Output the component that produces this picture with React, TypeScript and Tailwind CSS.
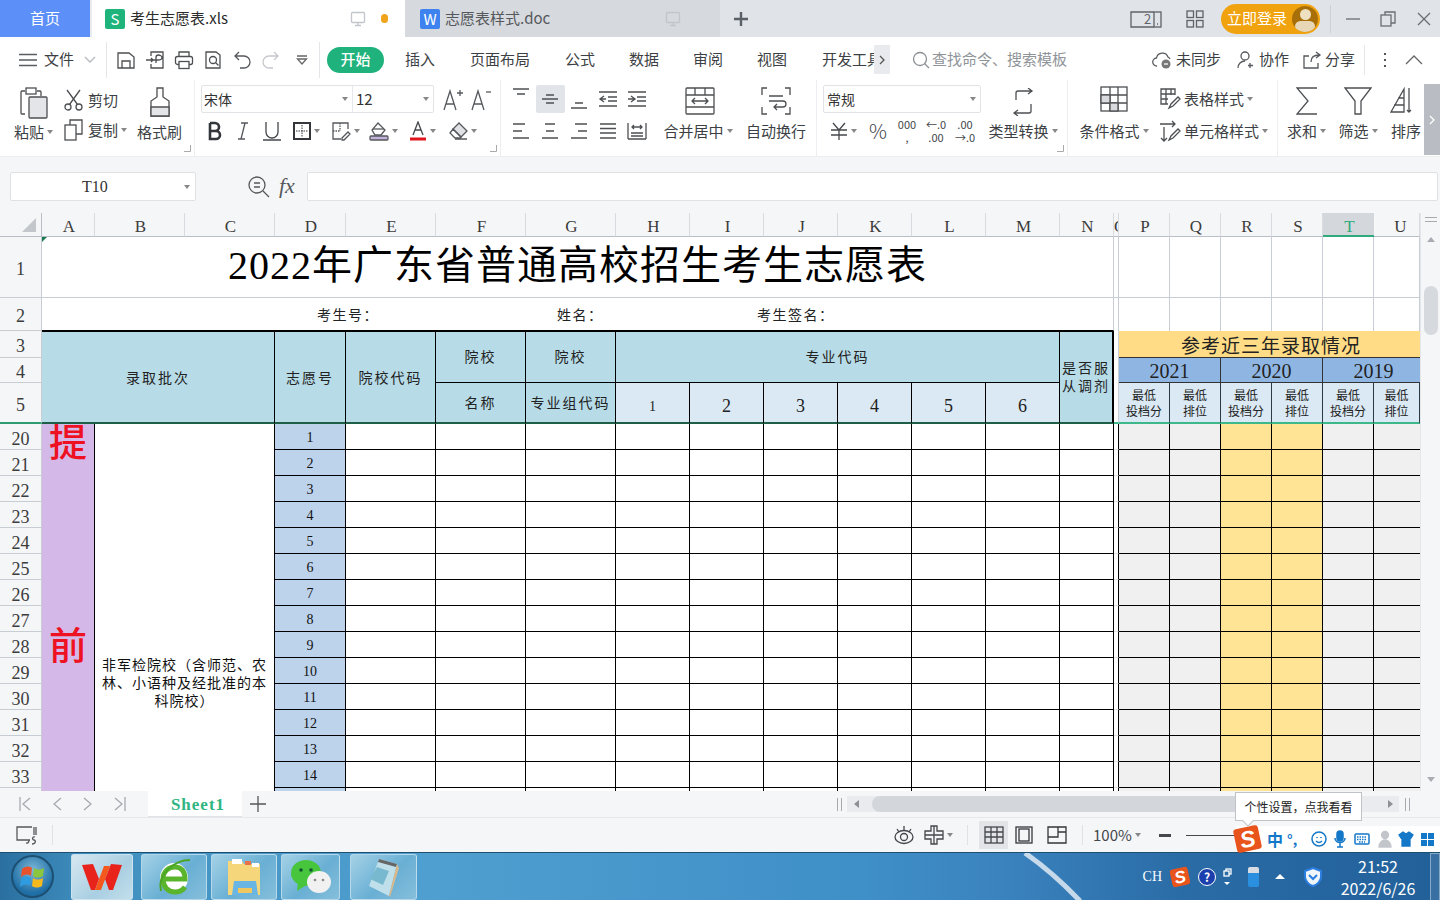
import React from 'react';

const serif = "font-['Liberation_Serif','Noto_Sans_CJK_SC',serif]";

const Ic: React.FC<{ w?: number; h?: number; vb?: string; c?: string; sw?: number; children: React.ReactNode }> = ({ w = 22, h = 22, vb, c = '#4d4f52', sw = 1.3, children }) => (
    <svg width={w} height={h} viewBox={vb || `0 0 ${w} ${h}`} fill="none" stroke={c} strokeWidth={sw} className="shrink-0">
        {children}
    </svg>
);

const Caret = () => (
    <svg width="6" height="4" viewBox="0 0 6 4" className="shrink-0 ml-[3px]"><path d="M0 0h6L3 4z" fill="#888" /></svg>
);

const Corner = () => (
    <svg width="7" height="7" viewBox="0 0 7 7"><path d="M6.5 0v6.5H0" fill="none" stroke="#aaa" /></svg>
);

const Monitor = ({ c = '#c2c6cc' }: { c?: string }) => (
    <Ic w={16} h={16} c={c}>
        <rect x="1.5" y="1.5" width="13" height="10" rx="1" />
        <path d="M8 11.5v3M5 14.5h6" />
    </Ic>
);

const TabBar = () => (
    <div className="h-[37px] flex bg-[#e0e3e8] shrink-0 text-[15px]">
        <div className="w-[90px] bg-[#5c8ff7] text-white flex items-center justify-center">首页</div>
        <div className="w-[2px] bg-[#e9ebef]" />
        <div className="w-[313px] bg-white flex items-center pl-[13px] text-[#2b2b2b]">
            <div className="w-[20px] h-[20px] rounded-[2px] bg-[#1fb47c] text-white text-[15px] flex items-center justify-center leading-none">S</div>
            <span className="ml-[5px] w-[220px]">考生志愿表.xls</span>
            <Monitor />
            <div className="w-[7px] h-[9px] rounded-full bg-[#f0a41c] ml-[15px]" />
        </div>
        <div className="w-[315px] bg-[#d6d9de] flex items-center pl-[15px] text-[#55585c]">
            <div className="w-[20px] h-[20px] rounded-[2px] bg-[#3d82ee] text-white text-[15px] flex items-center justify-center leading-none">W</div>
            <span className="ml-[5px] w-[220px]">志愿表样式.doc</span>
            <Monitor />
        </div>
        <div className="w-[42px] flex items-center justify-center">
            <Ic w={16} h={16} c="#5a6068" sw={2.4}><path d="M8 1v14M1 8h14" /></Ic>
        </div>
        <div className="w-[368px]" />
        <div className="flex items-center">
            <svg width="32" height="20" viewBox="0 0 32 20" fill="none" stroke="#5f6368" strokeWidth="1.3">
                <path d="M24 3H1v15h23" />
                <rect x="24" y="3" width="7" height="15" />
                <path d="M27 15h1" />
                <text x="14" y="15" fontSize="13" fill="#5f6368" stroke="none">2</text>
            </svg>
        </div>
        <div className="flex items-center ml-[24px]">
            <Ic w={18} h={18} c="#5f6368"><rect x="1" y="1" width="6.5" height="6.5" /><rect x="10.5" y="1" width="6.5" height="6.5" /><rect x="1" y="10.5" width="6.5" height="6.5" /><rect x="10.5" y="10.5" width="6.5" height="6.5" /></Ic>
        </div>
        <div className="flex items-center ml-[17px]">
            <div className="w-[99px] h-[30px] rounded-full bg-[#f0a30f] flex items-center justify-between pl-[6px] pr-[2px] text-white text-[15px]">
                <span>立即登录</span>
                <div className="w-[26px] h-[26px] rounded-full bg-[#a86f08] overflow-hidden flex flex-col items-center pt-[3px]">
                    <div className="w-[11px] h-[12px] rounded-full bg-[#efe0c2]" />
                    <div className="w-[20px] h-[12px] rounded-full bg-[#e8d7b6] mt-[1px]" />
                </div>
            </div>
        </div>
        <div className="flex items-center ml-[10px]"><div className="w-px h-[28px] bg-[#cdd0d5]" /></div>
        <div className="flex items-center ml-[15px]"><Ic w={14} h={14} c="#6a6d72"><path d="M0 7h14" /></Ic></div>
        <div className="flex items-center ml-[20px]"><Ic w={16} h={16} c="#6a6d72"><rect x="1" y="4" width="10" height="11" /><path d="M5 4V1h10v11h-4" /></Ic></div>
        <div className="flex items-center ml-[21px]"><Ic w={14} h={14} c="#6a6d72"><path d="M1 1l12 12M13 1L1 13" /></Ic></div>
    </div>
);

const MenuBar = () => (
    <div className="h-[43px] bg-white flex items-center text-[15px] text-[#3c3f44] shrink-0 pl-[19px] pt-[2px]">
        <Ic w={18} h={14} c="#5a5d62"><path d="M0 1.5h18M0 7h18M0 12.5h18" /></Ic>
        <span className="ml-[7px]">文件</span>
        <div className="ml-[10px]"><Ic w={12} h={8} c="#b5b8bd"><path d="M1 1l5 5 5-5" /></Ic></div>
        <div className="w-px h-[36px] bg-[#e4e6ea] ml-[10px]" />
        <div className="flex items-center ml-[9px] gap-[9px]">
            <Ic w={20} h={20}><path d="M2 3h11l5 4v11H2zM6 18v-7h8v7" /></Ic>
            <Ic w={20} h={20}><path d="M6 6V2h12v16H6v-4M1 10h7M6 8l2 2-2 2M8 10h5c3 0 4-1 4-2.500S15 5 13.500 5 11 6 11 7.500V13" /></Ic>
            <Ic w={20} h={20}><path d="M5 6V2h10v4" /><rect x="1.500" y="6.500" width="17" height="8" rx="2" /><rect x="5" y="11.500" width="10" height="7" fill="#fff" /></Ic>
            <Ic w={20} h={20}><path d="M3 2h10l4 3v13H3z" /><circle cx="10" cy="10" r="3.500" /><path d="M12.500 12.500l3 3" /></Ic>
            <Ic w={20} h={20} c="#55585c"><path d="M7 2L3 6l4 4M3 6h9a6 6 0 010 12H8" /></Ic>
            <Ic w={20} h={20} c="#c6c8cc"><path d="M13 2l4 4-4 4M17 6H8a6 6 0 000 12h4" /></Ic>
            <div className="ml-[6px]"><Ic w={12} h={12} c="#666"><path d="M1 2h10M1.500 5h9L6 10z" /></Ic></div>
        </div>
        <div className="w-px h-[36px] bg-[#e4e6ea] ml-[11px]" />
        <div className="ml-[7px] w-[57px] h-[26px] rounded-full bg-[#20b27c] text-white flex items-center justify-center font-medium">开始</div>
        <span className="ml-[21px] w-[65px]">插入</span>
        <span className="w-[95px]">页面布局</span>
        <span className="w-[64px]">公式</span>
        <span className="w-[64px]">数据</span>
        <span className="w-[64px]">审阅</span>
        <span className="w-[65px]">视图</span>
        <div className="w-[52px] overflow-hidden whitespace-nowrap">开发工具</div>
        <div className="w-[16px] h-[29px] bg-[#e8eaed] flex items-center justify-center">
            <Ic w={6} h={10} c="#555"><path d="M1 1l4 4-4 4" /></Ic>
        </div>
        <div className="ml-[22px]"><Ic w={18} h={18} c="#8b9096"><circle cx="8" cy="8" r="6.500" /><path d="M12.500 12.500L17 17" /></Ic></div>
        <span className="ml-[2px] w-[220px] text-[#8f9499]">查找命令、搜索模板</span>
        <Ic w={20} h={20} c="#55585c"><path d="M5 16a4 4 0 01-.5-8A6 6 0 0116 7a4 4 0 012 2" /><circle cx="14" cy="14" r="4.500" fill="#777" stroke="none" /><path d="M12 14h4" stroke="#fff" /></Ic>
        <span className="ml-[4px]">未同步</span>
        <div className="ml-[15px]"><Ic w={20} h={20} c="#55585c"><circle cx="9" cy="6" r="4" /><path d="M2 18c0-4 3-7 7-7M14 13v5M12 15.500h5" /></Ic></div>
        <span className="ml-[3px]">协作</span>
        <div className="ml-[13px]"><Ic w={20} h={20} c="#55585c"><path d="M7 6H2v12h14v-5M9 12c0-5 3-7 8-7M14 2l4 3-4 3" /></Ic></div>
        <span className="ml-[3px]">分享</span>
        <div className="w-px h-[30px] bg-[#e4e6ea] ml-[9px]" />
        <div className="ml-[19px] flex flex-col gap-[4px]">
            <div className="w-[2px] h-[2px] bg-[#555]" /><div className="w-[2px] h-[2px] bg-[#555]" /><div className="w-[2px] h-[2px] bg-[#555]" />
        </div>
        <div className="ml-[19px]"><Ic w={18} h={10} c="#666"><path d="M1 9l8-8 8 8" /></Ic></div>
    </div>
);

const Ribbon = () => (
    <div className="h-[77px] bg-white flex text-[15px] text-[#3c3f44] shrink-0 border-b border-[#eceef1] relative">
        {/* clipboard */}
        <div className="w-[195px] flex pt-[7px] border-r border-[#eceef1] relative">
            <div className="w-[58px] pl-[14px] flex flex-col">
                <div className="ml-[5px] h-[38px]">
                    <Ic w={30} h={32}><path d="M6 27H3a1 1 0 01-1-1V5a1 1 0 011-1h3M18 4h3a1 1 0 011 1v4" /><rect x="7" y="1" width="10" height="6" /><rect x="10" y="10" width="18" height="21" rx="1" fill="#e4e5e8" /></Ic>
                </div>
                <div className="flex items-center h-[20px] mt-[-3px] whitespace-nowrap">粘贴<Caret /></div>
            </div>
            <div className="w-[78px] flex flex-col pl-[6px]">
                <div className="flex items-center h-[26px]">
                    <Ic w={20} h={22}><circle cx="4" cy="18" r="3" /><circle cx="15" cy="18" r="3" /><path d="M5.500 15.500L16 1M13.500 15.500L3 1" /></Ic>
                    <span className="ml-[4px]">剪切</span>
                </div>
                <div className="flex items-center h-[34px]">
                    <Ic w={20} h={22}><rect x="1" y="6" width="11" height="15" /><path d="M6 6V1h12v14h-6" /></Ic>
                    <span className="ml-[4px] whitespace-nowrap">复制</span><Caret />
                </div>
            </div>
            <div className="w-[46px] flex flex-col items-center pl-[1px]">
                <div className="h-[34px]">
                    <Ic w={24} h={32}><path d="M9 1h6v9l6 4v15H3V14l6-4z" /><path d="M3 20h18v9H3z" fill="#e4e5e8" /></Ic>
                </div>
                <span className="whitespace-nowrap">格式刷</span>
            </div>
            <div className="absolute right-[3px] bottom-[4px]"><Corner /></div>
        </div>
        {/* font */}
        <div className="w-[306px] pl-[6px] pt-[5px] border-r border-[#eceef1] relative">
            <div className="flex items-center">
                <div className="flex w-[233px] h-[28px] border border-[#e1e3e6] rounded-[2px] items-center text-[14px] text-[#333]">
                    <div className="w-[151px] h-[26px] border-r border-[#e6e8eb] flex items-center justify-between pl-[2px] pr-[4px]">宋体<Caret /></div>
                    <div className="flex-1 flex items-center justify-between pl-[3px] pr-[4px] text-[15px]">12<Caret /></div>
                </div>
                <div className="ml-[8px] mt-[2px]">
                    <Ic w={22} h={24} c="#55585c"><path d="M2 22L8 3l6 19M4 16h8" /><path d="M15 5h6M18 2v6" /></Ic>
                </div>
                <div className="ml-[6px] mt-[2px]">
                    <Ic w={22} h={24} c="#55585c"><path d="M2 22L8 3l6 19M4 16h8" /><path d="M16 4h5" /></Ic>
                </div>
            </div>
            <div className="flex items-center mt-[3px] h-[30px]">
                <div className="w-[28px] flex justify-center"><Ic w={16} h={20} c="#33363a" sw={2.6}><path d="M3 2v16h6a4 4 0 000-8H3M3 10h5a4 4 0 000-8H3" /></Ic></div>
                <div className="w-[28px] flex justify-center"><Ic w={14} h={20} c="#55585c"><path d="M5 2h7M2 18h7M9 2L5 18" /></Ic></div>
                <div className="w-[30px] flex justify-center"><Ic w={18} h={20} c="#44474b"><path d="M3 1v10a6 6 0 0012 0V1M0 19h18" /></Ic></div>
                <div className="w-[39px] flex items-center justify-center"><Ic w={18} h={18} c="#33363a" sw={2}><rect x="1" y="1" width="16" height="16" /><path d="M9 3v12M3 9h12" strokeWidth="1" strokeDasharray="1.500 1" /></Ic><Caret /></div>
                <div className="w-[39px] flex items-center justify-center"><Ic w={20} h={20} c="#55585c"><path d="M10 18H2V2h15v6" /><path d="M2 10h7M9 2v8" strokeDasharray="1.500 1" /><path d="M11 17l6-6 2 2-6 6h-2z" /></Ic><Caret /></div>
                <div className="w-[37px] flex items-center justify-center"><Ic w={20} h={20} c="#55585c"><path d="M9 2l7 7-4 5H6L3 9z" /><path d="M4 8h11" /><rect x="1" y="15" width="18" height="4" rx="1" fill="#c5b3dc" /></Ic><Caret /></div>
                <div className="w-[41px] flex items-center justify-center"><Ic w={18} h={20} c="#44474b"><path d="M4 14L9 1l5 13M6 9h6" /><path d="M1 18h16" stroke="#e0141c" strokeWidth="3" /></Ic><Caret /></div>
                <div className="w-[39px] flex items-center justify-center"><Ic w={20} h={18} c="#55585c"><path d="M11 1l8 8-6 6-8-8z" fill="#dfe1e4" /><path d="M5 7l8 8-1 1H7l-5-5zM7 17h12" /></Ic><Caret /></div>
            </div>
            <div className="absolute right-[3px] bottom-[4px]"><Corner /></div>
        </div>
        {/* align */}
        <div className="w-[316px] flex pt-[5px] border-r border-[#eceef1]">
            <div className="w-[150px] pl-[6px]">
                <div className="flex items-center h-[28px]">
                    <div className="w-[29px] flex justify-center items-start h-full pt-[3px]"><Ic w={18} h={12}><path d="M1 1h16M5 6h8" /></Ic></div>
                    <div className="w-[29px] h-[28px] bg-[#e1e4e8] rounded-[2px] flex items-center justify-center"><Ic w={18} h={14}><path d="M1 7h16M5 3h8M5 11h8" /></Ic></div>
                    <div className="w-[29px] flex justify-center items-end h-full pb-[4px]"><Ic w={18} h={12}><path d="M5 6h8M1 11h16" /></Ic></div>
                    <div className="w-[29px] flex justify-center"><Ic w={20} h={16}><path d="M1 1h18M10 6h9M10 10h9M1 15h18M6 5L2 8l4 3M2 8h6" /></Ic></div>
                    <div className="w-[29px] flex justify-center"><Ic w={20} h={16}><path d="M1 1h18M10 6h9M10 10h9M1 15h18M4 5l4 3-4 3M8 8H1" /></Ic></div>
                </div>
                <div className="flex items-center h-[30px] mt-[3px]">
                    <div className="w-[29px] flex justify-center"><Ic w={18} h={16}><path d="M1 1h12M1 8h9M1 15h16" /></Ic></div>
                    <div className="w-[29px] flex justify-center"><Ic w={18} h={16}><path d="M4 1h10M5 8h8M1 15h16" /></Ic></div>
                    <div className="w-[29px] flex justify-center"><Ic w={18} h={16}><path d="M5 1h12M8 8h9M1 15h16" /></Ic></div>
                    <div className="w-[29px] flex justify-center"><Ic w={18} h={16}><path d="M1 1h16M1 5.500h16M1 10h16M1 15h16" /></Ic></div>
                    <div className="w-[29px] flex justify-center"><Ic w={20} h={18}><path d="M1 1v16M19 1v16M1 17h18M4 11h12M4 14h12M5 5h10M7 3L5 5l2 2M13 3l2 2-2 2" /></Ic></div>
                </div>
            </div>
            <div className="w-[94px] flex flex-col items-center">
                <div className="h-[35px] pt-[2px] pl-[4px]"><Ic w={30} h={28}><rect x="1" y="1" width="28" height="26" rx="1" /><path d="M1 8h28M10 1v7M20 1v7M1 20h28M7 14h16M10 11l-3 3 3 3M20 11l3 3-3 3" /></Ic></div>
                <div className="flex items-center whitespace-nowrap">合并居中<Caret /></div>
            </div>
            <div className="w-[62px] flex flex-col items-center">
                <div className="h-[35px] pt-[2px]"><Ic w={30} h={28}><path d="M6 1H1v7M24 1h5v7M6 27H1v-7M24 27h5v-7M8 9h14M8 14h14a3 3 0 010 6h-8M16 17l-3 3 3 3" /></Ic></div>
                <span className="whitespace-nowrap">自动换行</span>
            </div>
        </div>
        {/* number */}
        <div className="w-[251px] flex pt-[5px] pl-[6px] border-r border-[#eceef1] relative">
            <div className="w-[158px]">
                <div className="w-[158px] h-[28px] border border-[#e1e3e6] rounded-[2px] flex items-center justify-between pl-[3px] pr-[4px] text-[#333] text-[14px]">常规<Caret /></div>
                <div className="flex items-center h-[30px] mt-[3px] text-[#44474b]">
                    <div className="w-[36px] pl-[7px] flex items-center"><Ic w={18} h={18} c="#44474b"><path d="M3 1l6 7 6-7M1 8h16M1 13h16M9 8v10" /></Ic><Caret /></div>
                    <span className="w-[38px] text-center text-[20px] leading-none font-light">%</span>
                    <span className="w-[20px] text-center text-[11px] leading-[13px]">000<br />,</span>
                    <span className="w-[38px] text-center text-[11px] leading-[13px]">←.0<br />.00</span>
                    <span className="w-[20px] text-center text-[11px] leading-[13px]">.00<br />→.0</span>
                </div>
            </div>
            <div className="w-[80px] flex flex-col items-center ml-[2px]">
                <div className="h-[35px] pt-[3px]"><Ic w={26} h={28}><path d="M6 12V5a2 2 0 012-2h14M18 0l4 3-4 3M21 16v7a2 2 0 01-2 2H4M8 22l-4 3 4 3" /></Ic></div>
                <div className="flex items-center whitespace-nowrap">类型转换<Caret /></div>
            </div>
            <div className="absolute right-[3px] bottom-[4px]"><Corner /></div>
        </div>
        {/* styles */}
        <div className="w-[210px] flex pt-[5px] border-r border-[#eceef1]">
            <div className="w-[90px] flex flex-col items-center ml-[1px]">
                <div className="h-[35px] pt-[1px]"><Ic w={28} h={26}><rect x="1" y="1" width="26" height="24" /><path d="M1 9h26M1 17h26M10 1v24M18 1v24" /><rect x="1" y="9" width="9" height="8" fill="#d8dade" /><rect x="10" y="17" width="8" height="8" fill="#d8dade" /></Ic></div>
                <div className="flex items-center whitespace-nowrap">条件格式<Caret /></div>
            </div>
            <div className="flex flex-col">
                <div className="flex items-center h-[28px]">
                    <Ic w={22} h={22}><path d="M9 16H2V1h14v6M2 6h14M2 11h7M7 1v15M12 1v6M10 20l2-4 7-7 2 2-7 7z" /></Ic>
                    <span className="ml-[3px] whitespace-nowrap">表格样式</span><Caret />
                </div>
                <div className="flex items-center h-[30px] mt-[3px]">
                    <Ic w={22} h={22}><path d="M1 4h15M13 1l3 3-3 3M5 7v14M2 18l3 3 3-3M10 20l2-4 7-7 2 2-7 7z" /></Ic>
                    <span className="ml-[3px] whitespace-nowrap">单元格样式</span><Caret />
                </div>
            </div>
        </div>
        {/* sum filter sort */}
        <div className="flex pt-[5px] flex-1">
            <div className="w-[57px] flex flex-col items-center">
                <div className="h-[35px] pt-[2px]"><Ic w={22} h={28}><path d="M21 1H1l11 13L1 27h20" /></Ic></div>
                <div className="flex items-center">求和<Caret /></div>
            </div>
            <div className="w-[52px] flex flex-col items-center -ml-[3px]">
                <div className="h-[35px] pt-[2px]"><Ic w={28} h={28}><path d="M1 1h26L17 14v13h-6V14z" /></Ic></div>
                <div className="flex items-center">筛选<Caret /></div>
            </div>
            <div className="w-[53px] flex flex-col items-center">
                <div className="h-[35px] pt-[2px] pl-[6px] w-full"><Ic w={30} h={28}><path d="M1 25L14 2v23zM4 18h10M8 11h6M19 1v24M17 23l2 2 2-2" /></Ic></div>
                <div className="w-[32px] -ml-[7px] overflow-hidden whitespace-nowrap">排序</div>
            </div>
        </div>
        <div className="absolute right-0 top-[4px] w-[16px] h-[71px] bg-[#b9bcc2] flex items-center justify-center">
            <Ic w={6} h={10} c="#fff"><path d="M1 1l4 4-4 4" /></Ic>
        </div>
    </div>
);

const FormulaBar = () => (
    <div className="h-[56px] bg-[#f5f6f8] flex items-start pt-[15px] pl-[10px] pr-[2px] shrink-0">
        <div className="w-[186px] h-[29px] bg-white border border-[#dfe1e5] rounded-[2px] flex items-center justify-between pr-[5px]">
            <span className={`${serif} text-[16px] text-[#333] ml-[71px]`}>T10</span>
            <Caret />
        </div>
        <div className="ml-[52px] mt-[4px]"><Ic w={22} h={22} c="#55585c"><circle cx="9" cy="9" r="8" /><path d="M6 7h6M6 11h6M15 15l6 6" /></Ic></div>
        <span className={`ml-[9px] mt-[1px] ${serif} italic text-[22px] text-[#55585c] leading-[26px]`}>fx</span>
        <div className="ml-[12px] flex-1 h-[29px] bg-white border border-[#dfe1e5] rounded-[2px]" />
    </div>
);

const colLetters = ['A', 'B', 'C', 'D', 'E', 'F', 'G', 'H', 'I', 'J', 'K', 'L', 'M', 'N'];

const RowHead = ({ n, green }: { n: number; green?: boolean }) => (
    <div className={`${serif} bg-[#f5f6f8] border-r border-[#c8ccd3] text-[18px] text-[#3c3c3c] flex items-center justify-center pt-[5px] ${green ? 'border-b-2 border-b-[#2f9d73]' : 'border-b'}`}>{n}</div>
);

const ColHead = ({ l, active, shift }: { l: string; active?: boolean; shift?: boolean }) => (
    <div className={`${serif} text-[17px] flex items-center justify-center pt-[5px] ${shift ? 'pl-[8px]' : 'pl-[2px]'} border-b ${active ? 'bg-[#d4d7db] text-[#2eaa7c] border-b-2 border-b-[#2eaa7c]' : 'bg-[#f5f6f8] text-[#3c3c3c] border-[#b9bdc5] border-r border-r-[#d8dbe0]'}`}>{l}</div>
);

const hd = 'bg-[#b7dce8] border-r border-b border-black flex items-center justify-center text-[14px] text-[#222] tracking-[2px]';
const btm = 'border-b-2 border-b-[#1f5f48]';
const sub = `bg-[#dbe9f4] border-r border-black flex items-center justify-center text-[#222] pt-[7px] ${btm}`;
const thin = 'border-r border-[#c9ced6]';
const dataLine = 'border-r border-b border-black';

const MinCell = ({ a, b }: { a: string; b?: string }) => (
    <div className="bg-[#dbe9f4] border-r border-[#2b3a44] border-b-2 border-b-[#3cb88b] flex flex-col items-center justify-center text-[12px] leading-[16px] text-[#222] pt-[3px]">
        <span>{a}</span>
        {b && <span>{b}</span>}
    </div>
);

const rows = Array.from({ length: 15 }, (_, i) => i);

const Sheet = () => (
    <div className={`h-[578px] overflow-hidden flex shrink-0 bg-white ${serif}`}>
        <div className="relative w-[1420px] shrink-0 overflow-hidden">
            <div className="grid grid-cols-[42px_53px_90px_90px_71px_90px_90px_90px_74px_74px_74px_74px_74px_74px_54px_5px_51px_51px_51px_51px_51px_46px] grid-rows-[24px_61px_33px_27px_25px_41px] auto-rows-[26px]">
                {/* column letters */}
                <div className="bg-[#f5f6f8] border-b border-r border-[#b9bdc5] flex items-end justify-end pr-[5px] pb-[4px]">
                    <div className="w-0 h-0 border-l-[14px] border-l-transparent border-b-[14px] border-b-[#c3c7cc]" />
                </div>
                {colLetters.map((l) => <ColHead key={l} l={l} />)}
                <div className={`${serif} text-[17px] bg-[#f5f6f8] text-[#3c3c3c] border-b border-[#b9bdc5] overflow-hidden flex items-center pt-[5px] border-r border-r-[#d8dbe0]`}>O</div>
                {['P', 'Q', 'R', 'S'].map((l) => <ColHead key={l} l={l} />)}
                <ColHead l="T" active />
                <ColHead l="U" shift />

                {/* row 1 */}
                <RowHead n={1} />
                <div className="col-span-14 border-b border-r border-[#c9ced6] flex items-center justify-center text-[40px] tracking-[1px] text-black pb-[3px] whitespace-nowrap">2022年广东省普通高校招生考生志愿表</div>
                <div className={`${thin} border-b`} />
                {rows.slice(0, 6).map((i) => <div key={i} className={`${thin} border-b`} />)}

                {/* row 2 */}
                <RowHead n={2} />
                <div className="col-span-14 border-b border-b-black border-r border-r-[#c9ced6] flex items-center pl-[275px] text-[14px] tracking-[1.5px] text-[#222] pt-[2px]">
                    <span className="w-[240px]">考生号：</span>
                    <span className="w-[200px]">姓名：</span>
                    <span>考生签名：</span>
                </div>
                <div className={thin} />
                {rows.slice(0, 6).map((i) => <div key={i} className={thin} />)}

                {/* rows 3-5 */}
                <RowHead n={3} />
                <div className={`${hd} ${btm} col-span-3 row-span-3 border-t border-t-black pt-[3px]`}>录取批次</div>
                <div className={`${hd} ${btm} row-span-3 border-t border-t-black pt-[3px]`}>志愿号</div>
                <div className={`${hd} ${btm} row-span-3 border-t border-t-black pt-[3px]`}>院校代码</div>
                <div className={`${hd} row-span-2 border-t border-t-black`}>院校</div>
                <div className={`${hd} row-span-2 border-t border-t-black`}>院校</div>
                <div className={`${hd} col-span-6 row-span-2 border-t border-t-black`}>专业代码</div>
                <div className={`${hd} ${btm} row-span-3 border-t border-t-black border-r-2 leading-[18px] text-center pt-[2px] tracking-[1.5px]`}>是否服<br />从调剂</div>
                <div className="row-span-3 border-r border-[#c9ced6] border-b-2 border-b-[#3cb88b]" />
                <div className="col-span-6 bg-[#ffdc85] border-b border-[#333] flex items-center justify-center text-[19px] text-[#222] tracking-[1px] pt-[6px] pl-[3px]">参考近三年录取情况</div>

                <RowHead n={4} />
                <div className="col-span-2 bg-[#8fb6e3] border-r border-b border-[#333] flex items-center justify-center text-[20px] text-[#222] pt-[2px]">2021</div>
                <div className="col-span-2 bg-[#8fb6e3] border-r border-b border-[#333] flex items-center justify-center text-[20px] text-[#222] pt-[2px]">2020</div>
                <div className="col-span-2 bg-[#8fb6e3] border-b border-[#333] flex items-center justify-center text-[20px] text-[#222] pt-[2px] pl-[4px]">2019</div>

                <RowHead n={5} green />
                <div className={`${hd} ${btm} pt-[2px]`}>名称</div>
                <div className={`${hd} ${btm} tracking-[1px] pt-[2px]`}>专业组代码</div>
                <div className={`${sub} text-[14px]`}>1</div>
                <div className={`${sub} text-[18px]`}>2</div>
                <div className={`${sub} text-[18px]`}>3</div>
                <div className={`${sub} text-[18px]`}>4</div>
                <div className={`${sub} text-[18px]`}>5</div>
                <div className={`${sub} text-[18px]`}>6</div>
                <MinCell a="最低" b="投档分" />
                <MinCell a="最低" b="排位" />
                <MinCell a="最低" b="投档分" />
                <MinCell a="最低" b="排位" />
                <MinCell a="最低" b="投档分" />
                <MinCell a="最低" b="排位" />

                {/* data rows */}
                {rows.map((i) => (
                    <React.Fragment key={i}>
                        <RowHead n={20 + i} />
                        {i === 0 && (
                            <>
                                <div className="row-span-15 bg-[#d4b9e8] border-r border-black flex flex-col items-center text-[38px] leading-[38px] text-[#ee1122] overflow-hidden font-medium">
                                    <span>提</span>
                                    <span className="mt-[165px]">前</span>
                                </div>
                                <div className="col-span-2 row-span-15 border-r border-black pt-[233px] text-center text-[14px] leading-[18px] tracking-[1px] text-[#111]">
                                    非军检院校（含师范、农<br />林、小语种及经批准的本<br />科院校）
                                </div>
                            </>
                        )}
                        <div className={`bg-[#bdd3ec] ${dataLine} flex items-center justify-center text-[14px] text-[#111] pt-[2px]`}>{i + 1}</div>
                        {rows.slice(0, 10).map((c) => <div key={c} className={dataLine} />)}
                        <div className="border-r border-black border-b border-b-[#dfe1e5]" />
                        <div className={`bg-[#f0f0f0] ${dataLine}`} />
                        <div className={`bg-[#f0f0f0] ${dataLine}`} />
                        <div className={`bg-[#ffe496] ${dataLine}`} />
                        <div className={`bg-[#ffe496] ${dataLine}`} />
                        <div className={`bg-[#f0f0f0] ${dataLine}`} />
                        <div className="bg-[#f0f0f0] border-b border-black" />
                    </React.Fragment>
                ))}
            </div>
            <div className="absolute left-[42px] top-[24px] w-0 h-0 border-t-[5px] border-t-[#1c7a52] border-r-[5px] border-r-transparent" />
        </div>
        {/* vertical scrollbar */}
        <div className="flex-1 bg-[#f5f6f8] flex flex-col items-center border-l border-[#e4e6ea]">
            <div className="w-[12px] h-[5px] border-y border-[#aaa] mt-[4px]" />
            <div className="mt-[15px] w-0 h-0 border-x-[4px] border-x-transparent border-b-[5px] border-b-[#a9adb3]" />
            <div className="mt-[44px] w-[14px] h-[49px] rounded-full bg-[#d6d9de]" />
            <div className="mt-[442px] w-0 h-0 border-x-[4px] border-x-transparent border-t-[5px] border-t-[#a9adb3]" />
        </div>
    </div>
);

const SheetTabs = () => (
    <div className="h-[27px] bg-[#f5f6f8] flex items-start shrink-0 border-b border-[#e6e8eb] text-[#9ea2a8]">
        <div className="flex items-center h-[26px] pl-[19px] gap-[21px]">
            <Ic w={12} h={14} c="#a6aab0"><path d="M1 0v14M11 1L4 7l7 6" /></Ic>
            <Ic w={10} h={14} c="#a6aab0"><path d="M9 1L2 7l7 6" /></Ic>
            <Ic w={10} h={14} c="#a6aab0"><path d="M1 1l7 6-7 6" /></Ic>
            <Ic w={12} h={14} c="#a6aab0"><path d="M11 0v14M1 1l7 6-7 6" /></Ic>
        </div>
        <div className={`ml-[22px] w-[94px] h-[26px] bg-white border-b border-[#e0e2e6] flex items-center justify-center pl-[6px] pt-[2px] ${serif} text-[17px] tracking-[1px] font-bold text-[#2fb581]`}>Sheet1</div>
        <div className="ml-[8px] h-[26px] flex items-center"><Ic w={16} h={16} c="#555"><path d="M8 0v16M0 8h16" /></Ic></div>
        <div className="ml-[571px] h-[26px] flex items-center"><div className="w-[5px] h-[13px] border-x border-[#a6aab0]" /></div>
        <div className="ml-[5px] mt-[5px] w-[552px] h-[16px] bg-[#e9ebee] flex items-center pl-[7px]">
            <div className="w-0 h-0 border-y-[4px] border-y-transparent border-r-[5px] border-r-[#8d9197]" />
            <div className="ml-[13px] w-[400px] h-[16px] rounded-full bg-[#d3d6db]" />
            <div className="ml-auto mr-[6px] w-0 h-0 border-y-[4px] border-y-transparent border-l-[5px] border-l-[#8d9197]" />
        </div>
        <div className="ml-[6px] h-[26px] flex items-center"><div className="w-[5px] h-[13px] border-x border-[#a6aab0]" /></div>
    </div>
);

const StatusBar = () => (
    <div className="h-[34px] bg-[#f5f6f8] flex items-center shrink-0 pl-[16px] text-[#44474b]">
        <Ic w={22} h={20} c="#55585c"><path d="M16 2H1v13h13M18 2v8M20 2v8M10 18c3 1 3-3 3-3M19 12c-3-1-3 3-1 3s2 4-2 4" /></Ic>
        <div className="w-px h-[20px] bg-[#e0e2e6] ml-[14px]" />
        <div className="ml-[840px]"><Ic w={22} h={22} c="#44474b"><ellipse cx="11" cy="13" rx="9" ry="6.500" /><circle cx="11" cy="13" r="3.500" /><path d="M4 5l2 3M11 2v4M18 5l-2 3" /></Ic></div>
        <div className="ml-[9px] flex items-center"><Ic w={20} h={20} c="#44474b"><path d="M7 1h6v5h6v8h-6v5H7v-5H1V6h6zM10 1v18M1 10h18" /></Ic><Caret /></div>
        <div className="w-px h-[20px] bg-[#e0e2e6] ml-[14px]" />
        <div className="ml-[11px] w-[29px] h-[28px] bg-[#e2e4e8] flex items-center justify-center"><Ic w={20} h={18} c="#44474b"><rect x="1" y="1" width="18" height="16" /><path d="M1 6h18M1 11h18M7 1v16M13 1v16" /></Ic></div>
        <div className="ml-[3px] w-[26px] flex justify-center"><Ic w={18} h={18} c="#33363a"><rect x="1" y="1" width="16" height="16" /><rect x="4" y="3" width="10" height="12" /></Ic></div>
        <div className="ml-[7px] w-[26px] flex justify-center"><Ic w={20} h={18} c="#33363a"><path d="M1 1h18v16H1zM1 11h10V1M11 6h8" /></Ic></div>
        <div className="w-px h-[20px] bg-[#e0e2e6] ml-[12px]" />
        <div className="ml-[10px] flex items-center text-[15px] text-[#44474b]">100%<Caret /></div>
        <div className="ml-[18px] w-[12px] h-[3px] bg-[#44474b]" />
        <div className="ml-[15px] w-[60px] h-px bg-[#44474b]" />
    </div>
);

const TaskBtn = ({ w, active, children }: { w: string; active?: boolean; children: React.ReactNode }) => (
    <div className={`${w} h-[46px] rounded-[3px] border border-[#cfe6f2]/70 flex items-center justify-center ${active ? 'bg-[linear-gradient(135deg,#d7e8f0,#a9cfe2_60%,#c4dfeb)]' : 'bg-[linear-gradient(135deg,#a5d2e6,#69afd4_55%,#86bfdb)]'}`}>{children}</div>
);

const SogouLogo = ({ size, text }: { size: string; text: string }) => (
    <div className={`${size} ${text} rounded-[3px] bg-[#e9541c] text-white font-black italic flex items-center justify-center leading-none -rotate-12 font-['Liberation_Sans',sans-serif]`}>S</div>
);

const Taskbar = () => (
    <div className="h-[48px] relative overflow-hidden flex items-center border-t border-[#1f4f6e] bg-[linear-gradient(90deg,#2a6f9f_0%,#3f8fbf_6%,#4f9fd0_30%,#3f8fc8_60%,#3a82be_70%,#2a6ca6_82%,#22609a_100%)]">
        <svg width="120" height="48" viewBox="0 0 120 48" className="absolute left-[1000px] top-0"><path d="M25 0c20 14 38 30 55 48" stroke="#dfeaf3" strokeWidth="5" fill="none" opacity="0.85" /></svg>
        <div className="ml-[11px] w-[43px] h-[43px] rounded-full border-2 border-[#1d4f73] bg-[radial-gradient(circle_at_50%_35%,#7fb9d8,#1f6fa6_70%)] flex items-center justify-center shrink-0">
            <svg width="28" height="28" viewBox="0 0 28 28"><path d="M3 6c4-3 7-3 10-1l-1 8c-3-2-6-2-10 1z" fill="#e8532d" /><path d="M15 5c3 2 6 2 10 0l-1 8c-4 2-7 2-10 0z" fill="#8cc63e" /><path d="M2 16c4-3 7-3 10-1l-1 8c-3-2-6-2-10 1z" fill="#2f9be0" /><path d="M14 15c3 2 6 2 10 0l-1 8c-4 2-7 2-10 0z" fill="#f6b91b" /></svg>
        </div>
        <div className="ml-[17px] flex gap-[4px]">
            <TaskBtn w="w-[62px]" active>
                <svg width="42" height="30" viewBox="0 0 42 30"><path d="M1 3l11-1 6 15-4 11h-4z" fill="#e8231c" /><path d="M41 3l-11-1-6 15 4 11h4z" fill="#e8231c" /><path d="M14 28l9-24 6 0-9 24z" fill="#f4581c" /></svg>
            </TaskBtn>
            <div className="w-0" />
            <TaskBtn w="w-[66px]">
                <svg width="36" height="40" viewBox="0 0 36 40" fill="none"><ellipse cx="18" cy="21" rx="14" ry="15" fill="#fff" /><path d="M8 22h21c0-8-4-12-10-12S7 14 7 22s5 13 12 13c5 0 8-2 10-5" stroke="#5ab42c" strokeWidth="5" /><path d="M5 34C1 18 18 3 34 3" stroke="#4ca626" strokeWidth="2" /></svg>
            </TaskBtn>
            <TaskBtn w="w-[66px]">
                <svg width="40" height="40" viewBox="0 0 40 40"><path d="M4 4h14l2 3h16v31H4z" fill="#f5d67a" /><rect x="8" y="2" width="10" height="5" fill="#fff" /><rect x="21" y="4" width="6" height="4" fill="#e8734a" /><rect x="28" y="6" width="7" height="4" fill="#fff" /><path d="M10 24h22l2 14H8z" fill="#69b6e4" /><rect x="14" y="31" width="14" height="5" fill="#f0c75e" /></svg>
            </TaskBtn>
            <TaskBtn w="w-[59px]">
                <svg width="42" height="36" viewBox="0 0 42 36"><ellipse cx="16" cy="14" rx="15" ry="13" fill="#46c53d" /><path d="M8 24l-1 8 8-5z" fill="#46c53d" /><ellipse cx="29" cy="23" rx="12" ry="11" fill="#f1f1f1" /><circle cx="11" cy="11" r="1.800" fill="#153" /><circle cx="21" cy="11" r="1.800" fill="#153" /><circle cx="25" cy="21" r="1.300" fill="#888" /><circle cx="33" cy="21" r="1.300" fill="#888" /></svg>
            </TaskBtn>
            <div className="w-[2px]" />
            <TaskBtn w="w-[67px]">
                <svg width="38" height="40" viewBox="0 0 38 40"><path d="M14 2l18 5-8 32-20-10z" fill="#bfe0ea" /><path d="M14 2l18 5-1 3-18-5z" fill="#666" /><path d="M32 7l2 4-9 29-1-1z" fill="#d9b98b" /><path d="M5 22l7-12 12 4-6 14z" fill="#79b9cf" /></svg>
            </TaskBtn>
        </div>
        <div className="ml-auto flex items-center text-white shrink-0">
            <span className={`${serif} text-[14px] mr-[9px]`}>CH</span>
            <SogouLogo size="w-[18px] h-[18px]" text="text-[17px]" />
            <div className="ml-[9px] w-[18px] h-[18px] rounded-full bg-[#1c3fae] border border-white text-white text-[12px] font-bold flex items-center justify-center">?</div>
            <div className="ml-[6px] flex flex-col items-center gap-[5px] w-[10px]">
                <Ic w={9} h={9} c="#fff"><rect x="3" y="1" width="5" height="5" /><rect x="1" y="3" width="5" height="5" fill="#2a6ca6" /></Ic>
                <div className="w-0 h-0 border-x-[3px] border-x-transparent border-t-[3px] border-t-white" />
            </div>
            <div className="ml-[16px] w-[11px] h-[20px] rounded-[2px] bg-[#2b8fe0] border-t-[6px] border-[#d7dde2]" />
            <div className="ml-[16px] w-0 h-0 border-x-[5px] border-x-transparent border-b-[5px] border-b-white" />
            <div className="ml-[19px]"><Ic w={18} h={20} c="#2b7de0" sw={2}><path d="M9 1l8 3v6c0 4-4 8-8 9-4-1-8-5-8-9V4z" fill="#eef5fb" /><path d="M5 8l4 4 4-4" /></Ic></div>
            <div className="ml-[13px] w-[86px] flex flex-col items-center text-[16px] leading-[22px]">
                <span>21:52</span>
                <span>2022/6/26</span>
            </div>
            <div className="ml-[9px] w-[10px] h-[48px] border border-white/40 bg-white/10" />
        </div>
    </div>
);

const SogouBar = () => (
    <div className="absolute left-[1236px] top-[826px] w-[204px] h-[26px] bg-white flex items-center">
        <div className="-ml-[1px]"><SogouLogo size="w-[25px] h-[24px]" text="text-[23px]" /></div>
        <span className="ml-[7px] text-[16px] font-bold text-[#1478c8]">中</span>
        <span className="ml-[4px] text-[14px] font-bold text-[#1478c8] leading-none">°,</span>
        <div className="ml-[14px]"><Ic w={16} h={16} c="#1478c8" sw={1.5}><circle cx="8" cy="8" r="7" /><path d="M5 10c2 2 4 2 6 0M6 6v1M10 6v1" /></Ic></div>
        <div className="ml-[7px]"><Ic w={12} h={18} c="#1478c8" sw={1.5}><rect x="3" y="1" width="6" height="10" rx="3" fill="#1478c8" /><path d="M1 8c0 6 10 6 10 0M6 13v4M3 17h6" /></Ic></div>
        <div className="ml-[8px]"><Ic w={16} h={14} c="#1478c8" sw={1.5}><rect x="1" y="2" width="14" height="10" rx="1" /><path d="M3 5h10M3 7.500h10M5 10h6" strokeDasharray="1.500 1" /></Ic></div>
        <div className="ml-[8px]"><Ic w={14} h={18} c="#c2c6cb"><circle cx="7" cy="5" r="3.500" fill="#c2c6cb" /><path d="M1 17c0-4 3-7 6-7s6 3 6 7z" fill="#c2c6cb" /></Ic></div>
        <div className="ml-[6px]"><Ic w={16} h={16} c="#1478c8"><path d="M5 1L1 4l2 3 1-1v9h8V6l1 1 2-3-4-3-3 2z" fill="#1478c8" /></Ic></div>
        <div className="ml-[7px] grid grid-cols-2 gap-[1px]">
            <div className="w-[6px] h-[6px] bg-[#1478c8]" /><div className="w-[6px] h-[6px] bg-[#1478c8]" />
            <div className="w-[6px] h-[6px] bg-[#1478c8]" /><div className="w-[6px] h-[6px] bg-[#1478c8]" />
        </div>
    </div>
);

const Tip = () => (
    <div className="absolute left-[1235px] top-[792px] w-[127px] h-[29px] bg-white border border-[#bfc2c6] flex items-center justify-center text-[12px] text-[#222]">
        个性设置，点我看看
        <div className="absolute left-[8px] -bottom-[5px] w-[8px] h-[8px] bg-white border-r border-b border-[#bfc2c6] rotate-45" />
    </div>
);

export default function App() {
    return (
        <div className="relative w-[1440px] h-[900px] overflow-hidden flex flex-col bg-white font-['Noto_Sans_CJK_SC','Noto_Sans',sans-serif]">
            <TabBar />
            <MenuBar />
            <Ribbon />
            <FormulaBar />
            <Sheet />
            <SheetTabs />
            <StatusBar />
            <Taskbar />
            <SogouBar />
            <Tip />
        </div>
    );
}
